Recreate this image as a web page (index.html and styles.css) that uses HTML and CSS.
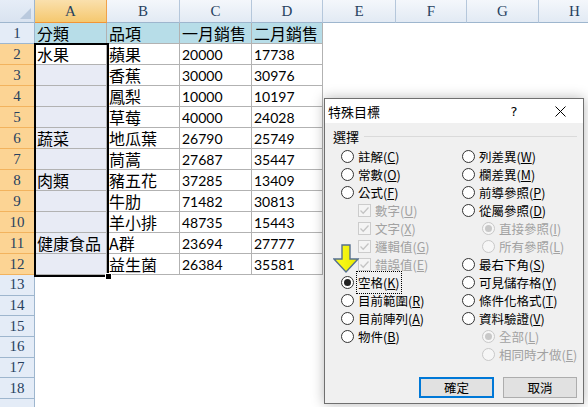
FILE: index.html
```html
<!DOCTYPE html>
<html lang="zh-Hant">
<head>
<meta charset="utf-8">
<title>特殊目標</title>
<link rel="stylesheet" href="styles.css">
</head>
<body>
<div class="app">
  <div class="sheet">
    <div class="corner"><svg width="11" height="11" viewBox="0 0 11 11"><polygon points="11,0 11,11 0,11" fill="#b9c9dd"/></svg></div>
    <div class="ch sel">A</div><div class="ch">B</div><div class="ch">C</div><div class="ch">D</div><div class="ch">E</div><div class="ch">F</div><div class="ch">G</div><div class="ch">H</div>

    <div class="rh">1</div><div class="c hd">分類</div><div class="c hd">品項</div><div class="c hd">一月銷售</div><div class="c hd">二月銷售</div><div class="fill"></div>
    <div class="rh sel">2</div><div class="c active">水果</div><div class="c">蘋果</div><div class="c num">20000</div><div class="c num">17738</div><div class="fill"></div>
    <div class="rh sel">3</div><div class="c a"></div><div class="c">香蕉</div><div class="c num">30000</div><div class="c num">30976</div><div class="fill"></div>
    <div class="rh sel">4</div><div class="c a"></div><div class="c">鳳梨</div><div class="c num">10000</div><div class="c num">10197</div><div class="fill"></div>
    <div class="rh sel">5</div><div class="c a"></div><div class="c">草莓</div><div class="c num">40000</div><div class="c num">24028</div><div class="fill"></div>
    <div class="rh sel">6</div><div class="c a">蔬菜</div><div class="c">地瓜葉</div><div class="c num">26790</div><div class="c num">25749</div><div class="fill"></div>
    <div class="rh sel">7</div><div class="c a"></div><div class="c">茼蒿</div><div class="c num">27687</div><div class="c num">35447</div><div class="fill"></div>
    <div class="rh sel">8</div><div class="c a">肉類</div><div class="c">豬五花</div><div class="c num">37285</div><div class="c num">13409</div><div class="fill"></div>
    <div class="rh sel">9</div><div class="c a"></div><div class="c">牛肋</div><div class="c num">71482</div><div class="c num">30813</div><div class="fill"></div>
    <div class="rh sel">10</div><div class="c a"></div><div class="c">羊小排</div><div class="c num">48735</div><div class="c num">15443</div><div class="fill"></div>
    <div class="rh sel">11</div><div class="c a">健康食品</div><div class="c">A群</div><div class="c num">23694</div><div class="c num">27777</div><div class="fill"></div>
    <div class="rh sel">12</div><div class="c a"></div><div class="c">益生菌</div><div class="c num">26384</div><div class="c num">35581</div><div class="fill"></div>

    <div class="rh">13</div><div class="blank"></div>
    <div class="rh">14</div><div class="blank"></div>
    <div class="rh">15</div><div class="blank"></div>
    <div class="rh">16</div><div class="blank"></div>
    <div class="rh">17</div><div class="blank"></div>
    <div class="rh">18</div><div class="blank"></div>
    <div class="rh"></div><div class="blank"></div>
  </div>

  <div class="selection"><div class="handle"></div></div>

  <div class="dialog">
    <div class="titlebar">
      <span class="title">特殊目標</span>
      <span class="tbtn help">?</span>
      <span class="tbtn close"><svg width="11" height="11" viewBox="0 0 11 11"><path d="M0.5 0.5 L10.5 10.5 M10.5 0.5 L0.5 10.5" stroke="#000" stroke-width="1"/></svg></span>
    </div>
    <div class="dbody">
      <div class="group"><span>選擇</span><span class="gline"></span></div>
      <div class="opts">
        <div class="opt"><i class="radio"></i><span>註解(<u>C</u>)</span></div>
        <div class="opt"><i class="radio"></i><span>列差異(<u>W</u>)</span></div>

        <div class="opt"><i class="radio"></i><span>常數(<u>O</u>)</span></div>
        <div class="opt"><i class="radio"></i><span>欄差異(<u>M</u>)</span></div>

        <div class="opt"><i class="radio"></i><span>公式(<u>F</u>)</span></div>
        <div class="opt"><i class="radio"></i><span>前導參照(<u>P</u>)</span></div>

        <div class="opt sub dis"><i class="check"><svg width="11" height="11" viewBox="0 0 11 11"><path d="M1.5 5.5 L4.2 8.2 L9.5 2.5" fill="none" stroke="#c4c4c4" stroke-width="1.3"/></svg></i><span>數字(<u>U</u>)</span></div>
        <div class="opt"><i class="radio"></i><span>從屬參照(<u>D</u>)</span></div>

        <div class="opt sub dis"><i class="check"><svg width="11" height="11" viewBox="0 0 11 11"><path d="M1.5 5.5 L4.2 8.2 L9.5 2.5" fill="none" stroke="#c4c4c4" stroke-width="1.3"/></svg></i><span>文字(<u>X</u>)</span></div>
        <div class="opt sub2 dis"><i class="radio on"></i><span>直接參照(<u>I</u>)</span></div>

        <div class="opt sub dis"><i class="check"><svg width="11" height="11" viewBox="0 0 11 11"><path d="M1.5 5.5 L4.2 8.2 L9.5 2.5" fill="none" stroke="#c4c4c4" stroke-width="1.3"/></svg></i><span>邏輯值(<u>G</u>)</span></div>
        <div class="opt sub2 dis"><i class="radio"></i><span>所有參照(<u>L</u>)</span></div>

        <div class="opt sub dis"><i class="check"><svg width="11" height="11" viewBox="0 0 11 11"><path d="M1.5 5.5 L4.2 8.2 L9.5 2.5" fill="none" stroke="#c4c4c4" stroke-width="1.3"/></svg></i><span>錯誤值(<u>E</u>)</span></div>
        <div class="opt"><i class="radio"></i><span>最右下角(<u>S</u>)</span></div>

        <div class="opt"><i class="radio on"></i><span class="focus">空格(<u>K</u>)</span></div>
        <div class="opt"><i class="radio"></i><span>可見儲存格(<u>Y</u>)</span></div>

        <div class="opt"><i class="radio"></i><span>目前範圍(<u>R</u>)</span></div>
        <div class="opt"><i class="radio"></i><span>條件化格式(<u>T</u>)</span></div>

        <div class="opt"><i class="radio"></i><span>目前陣列(<u>A</u>)</span></div>
        <div class="opt"><i class="radio"></i><span>資料驗證(<u>V</u>)</span></div>

        <div class="opt"><i class="radio"></i><span>物件(<u>B</u>)</span></div>
        <div class="opt sub2 dis"><i class="radio on"></i><span>全部(<u>L</u>)</span></div>

        <div class="opt"></div>
        <div class="opt sub2 dis"><i class="radio"></i><span>相同時才做(<u>E</u>)</span></div>
      </div>
      <div class="btns">
        <button class="btn ok">確定</button>
        <button class="btn">取消</button>
      </div>
    </div>
  </div>

  <svg class="arrow" width="26" height="30" viewBox="0 0 26 30">
    <defs>
      <linearGradient id="yg" x1="0" y1="0" x2="1" y2="0">
        <stop offset="0" stop-color="#ffff20"/>
        <stop offset="1" stop-color="#e8e800"/>
      </linearGradient>
    </defs>
    <polygon points="9,1 17,1 17,15 25,15 13,28 1,15 9,15" fill="url(#yg)" stroke="#56708f" stroke-width="1.4" stroke-linejoin="miter"/>
  </svg>
</div>
</body>
</html>
```

FILE: styles.css
```css
* { box-sizing: border-box; margin: 0; padding: 0; }
html, body { width: 588px; height: 407px; overflow: hidden; background: #fff; }
body { font-family: "Noto Sans CJK TC", sans-serif; color: #000; }

.app { position: relative; width: 588px; height: 407px; overflow: hidden; }

.sheet {
  display: grid;
  grid-template-columns: 35px 72px 73px 72px 71px 73px 71px 72px 72px;
  grid-template-rows: 23px repeat(12, 21px) repeat(7, 20.7px);
  width: 611px;
}

.corner {
  background: linear-gradient(#e6edf7, #d9e3f0);
  border-right: 1px solid #9eb6ce;
  border-bottom: 1px solid #9eb6ce;
  display: flex;
  align-items: flex-end;
  justify-content: flex-end;
  padding: 0 3px 3px 0;
}

.ch {
  font-family: "Liberation Serif", serif;
  font-size: 15px;
  color: #27415f;
  display: flex;
  align-items: center;
  justify-content: center;
  background: linear-gradient(#f4f7fb, #e2eaf4);
  border-right: 1px solid #b5c7db;
  border-bottom: 1px solid #9eb6ce;
}
.ch.sel {
  background: linear-gradient(#fae0ad, #f5c86f);
  border-right-color: #f0a14a;
  border-bottom-color: #f29536;
}

.rh {
  font-family: "Liberation Serif", serif;
  font-size: 15px;
  color: #27415f;
  display: flex;
  align-items: center;
  justify-content: center;
  background: #e4ecf7;
  border-right: 1px solid #9eb6ce;
  border-bottom: 1px solid #9eb6ce;
}
.rh.sel {
  background: #fcd494;
  border-right-color: #f29536;
  border-bottom-color: #f2b35e;
}

.c {
  border-right: 1px solid #b2b2b2;
  border-bottom: 1px solid #b2b2b2;
  font-size: 16px;
  line-height: 20px;
  padding-left: 2px;
  white-space: nowrap;
}
.c.hd { background: #b7dde8; }
.c.a { background: #e8ebf5; }
.c.active { background: #fff; }
.c.num {
  font-family: Lato, "Liberation Sans", sans-serif;
  font-size: 14px;
  padding-top: 1px;
}

.fill { grid-column: 6 / -1; background: #fff; }
.blank { grid-column: 2 / -1; background: #fff; }

/* selection outline over the sheet */
.selection {
  position: absolute;
  left: 34px;
  top: 43px;
  width: 75px;
  height: 234px;
  border: 2px solid #000;
}
.handle {
  position: absolute;
  right: -5px;
  bottom: -5px;
  width: 7px;
  height: 7px;
  background: #000;
  border: 1px solid #fff;
}

/* dialog */
.dialog {
  position: absolute;
  left: 324px;
  top: 98px;
  width: 260px;
  height: 306px;
  border: 1px solid #6f6f6f;
  background: #f0f0f0;
  box-shadow: 0 0 12px rgba(0, 0, 0, 0.28);
  display: flex;
  flex-direction: column;
  font-size: 12.5px;
}
.titlebar {
  flex: none;
  height: 24px;
  background: #fff;
  display: flex;
  align-items: center;
}
.title { flex: 1; padding-left: 3px; font-size: 13px; }
.tbtn {
  width: 46px;
  height: 24px;
  display: flex;
  align-items: center;
  justify-content: center;
}
.help { font-family: "DejaVu Sans", sans-serif; font-size: 13px; }

.dbody {
  flex: 1;
  display: flex;
  flex-direction: column;
  padding: 5px 6px 5px 8px;
}
.group {
  height: 16px;
  display: flex;
  align-items: center;
  gap: 5px;
  font-size: 13px;
}
.gline { flex: 1; height: 1px; background: #dadada; margin-right: 0; }

.opts {
  margin-top: 3px;
  margin-left: 8px;
  display: grid;
  grid-template-columns: 121px 1fr;
  grid-auto-rows: 18px;
}
.opt {
  display: flex;
  align-items: center;
  gap: 4px;
  white-space: nowrap;
}
.opt u { text-decoration: underline; text-underline-offset: 1px; }
.opt.sub { padding-left: 17px; }
.opt.sub2 { padding-left: 20px; }
.opt.dis { color: #a2a2a2; }

.radio {
  flex: none;
  width: 13px;
  height: 13px;
  border-radius: 50%;
  border: 1px solid #333;
  background: #fff;
  display: flex;
  align-items: center;
  justify-content: center;
}
.radio.on::after {
  content: "";
  width: 7px;
  height: 7px;
  border-radius: 50%;
  background: #222;
}
.dis .radio { border-color: #c8c8c8; background: #f6f6f6; }
.dis .radio.on::after { background: #c8c8c8; }

.check {
  flex: none;
  width: 13px;
  height: 13px;
  border: 1px solid #cccccc;
  background: #f4f4f4;
  display: flex;
  align-items: center;
  justify-content: center;
}

.focus { outline: 1px dotted #000; outline-offset: 1px; }

.btns {
  margin-top: auto;
  display: flex;
  justify-content: flex-end;
  gap: 9px;
}
.btn {
  font-family: "Noto Sans CJK TC", sans-serif;
  font-size: 12.5px;
  width: 74px;
  height: 21px;
  background: #e1e1e1;
  border: 1px solid #adadad;
  color: #000;
  display: flex;
  align-items: center;
  justify-content: center;
}
.btn.ok { width: 75px; border: 2px solid #0078d7; }

.arrow { position: absolute; left: 333px; top: 244px; }
```
